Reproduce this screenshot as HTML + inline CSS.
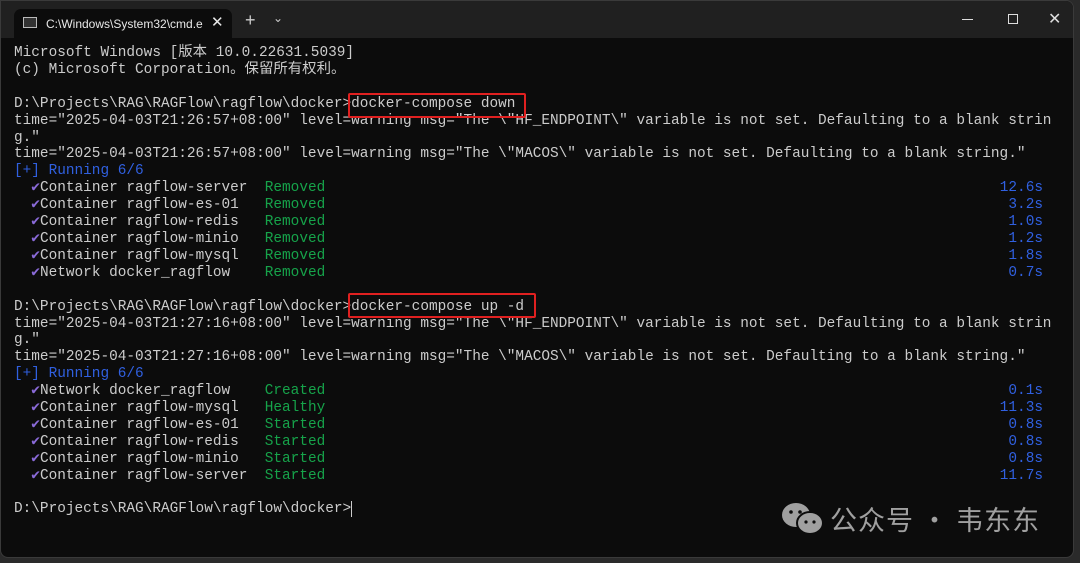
<!DOCTYPE html>
<html><head><meta charset="utf-8"><style>
*{margin:0;padding:0;box-sizing:border-box}
body{width:1080px;height:563px;background:#2a2a2a;overflow:hidden;position:relative;font-family:"Liberation Mono","Noto Sans CJK SC",monospace}
.win{position:absolute;left:0;top:0;width:1074px;height:558px;background:#0c0c0c;border:1px solid #3a3a3a;border-radius:0 8px 8px 8px;overflow:hidden}
.title{position:absolute;left:0;top:0;right:0;height:37px;background:#202020}
.tab{position:absolute;left:13px;top:8px;width:218px;height:29px;background:#0c0c0c;border-radius:7px 7px 0 0;color:#e8e8e8;font:12px "Liberation Sans",sans-serif}
pre{position:absolute;top:44px;font-size:14.42px;line-height:16.9px;color:#cccccc;font-family:"Liberation Mono","Noto Sans CJK SC",monospace;white-space:pre}
.b{color:#3060e0}.g{color:#16a34a}
.p{color:#8a6ad8;display:inline-block;width:17.3px;text-align:right}
.box{position:absolute;border:2px solid #e02020;border-radius:2px}
.wm{position:absolute;left:830px;top:499px;color:#a0a0a0;font:27px "Noto Sans CJK SC",sans-serif;letter-spacing:1px}
</style></head><body>
<div class="win">
<div class="title">
<div class="tab">
<div style="position:absolute;left:9px;top:8px;width:14px;height:11px;border:1px solid #bbb;background:#333"></div>
<span style="position:absolute;left:32px;top:8px">C:\Windows\System32\cmd.e</span>
<span style="position:absolute;left:197px;top:4px;font-size:15px">✕</span>
</div>
<span style="position:absolute;left:244px;top:9px;color:#ccc;font:18px 'Liberation Sans',sans-serif">+</span>
<span style="position:absolute;left:272px;top:10px;color:#ccc;font:12px 'Liberation Sans',sans-serif">⌄</span>
<div style="position:absolute;left:961px;top:18px;width:11px;height:1px;background:#ddd"></div>
<div style="position:absolute;left:1007px;top:13px;width:10px;height:10px;border:1px solid #ddd"></div>
<span style="position:absolute;left:1047px;top:8px;color:#ddd;font:16px 'Liberation Sans',sans-serif">✕</span>
</div>
<pre style="left:13px">Microsoft Windows [版本 10.0.22631.5039]
(c) Microsoft Corporation。保留所有权利。

D:\Projects\RAG\RAGFlow\ragflow\docker>docker-compose down
time="2025-04-03T21:26:57+08:00" level=warning msg="The \"HF_ENDPOINT\" variable is not set. Defaulting to a blank strin
g."
time="2025-04-03T21:26:57+08:00" level=warning msg="The \"MACOS\" variable is not set. Defaulting to a blank string."
<span class="b">[+] Running 6/6</span>
 <span class="p">✔</span>Container ragflow-server  <span class="g">Removed</span>
 <span class="p">✔</span>Container ragflow-es-01   <span class="g">Removed</span>
 <span class="p">✔</span>Container ragflow-redis   <span class="g">Removed</span>
 <span class="p">✔</span>Container ragflow-minio   <span class="g">Removed</span>
 <span class="p">✔</span>Container ragflow-mysql   <span class="g">Removed</span>
 <span class="p">✔</span>Network docker_ragflow    <span class="g">Removed</span>

D:\Projects\RAG\RAGFlow\ragflow\docker>docker-compose up -d
time="2025-04-03T21:27:16+08:00" level=warning msg="The \"HF_ENDPOINT\" variable is not set. Defaulting to a blank strin
g."
time="2025-04-03T21:27:16+08:00" level=warning msg="The \"MACOS\" variable is not set. Defaulting to a blank string."
<span class="b">[+] Running 6/6</span>
 <span class="p">✔</span>Network docker_ragflow    <span class="g">Created</span>
 <span class="p">✔</span>Container ragflow-mysql   <span class="g">Healthy</span>
 <span class="p">✔</span>Container ragflow-es-01   <span class="g">Started</span>
 <span class="p">✔</span>Container ragflow-redis   <span class="g">Started</span>
 <span class="p">✔</span>Container ragflow-minio   <span class="g">Started</span>
 <span class="p">✔</span>Container ragflow-server  <span class="g">Started</span>

D:\Projects\RAG\RAGFlow\ragflow\docker><span style="border-left:1px solid #ccc"></span></pre>
<pre class="b" style="right:30px;top:44px;text-align:right;color:#3060e0">&nbsp;
&nbsp;
&nbsp;
&nbsp;
&nbsp;
&nbsp;
&nbsp;
&nbsp;
12.6s
3.2s
1.0s
1.2s
1.8s
0.7s
&nbsp;
&nbsp;
&nbsp;
&nbsp;
&nbsp;
&nbsp;
0.1s
11.3s
0.8s
0.8s
0.8s
11.7s</pre>
<div class="box" style="left:347px;top:92px;width:178px;height:25px"></div>
<div class="box" style="left:347px;top:292px;width:188px;height:25px"></div>
</div>
<svg style="position:absolute;left:781px;top:502px" width="44" height="34" viewBox="0 0 44 34">
<ellipse cx="15" cy="13" rx="14" ry="12" fill="#a0a0a0"/>
<ellipse cx="29" cy="21" rx="13" ry="11" fill="#a0a0a0" stroke="#0c0c0c" stroke-width="2"/>
<circle cx="10" cy="10" r="1.8" fill="#0c0c0c"/><circle cx="19" cy="10" r="1.8" fill="#0c0c0c"/>
<circle cx="25" cy="20" r="1.6" fill="#0c0c0c"/><circle cx="33" cy="20" r="1.6" fill="#0c0c0c"/>
</svg>
<div class="wm">公众号 · 韦东东</div>
</body></html>
